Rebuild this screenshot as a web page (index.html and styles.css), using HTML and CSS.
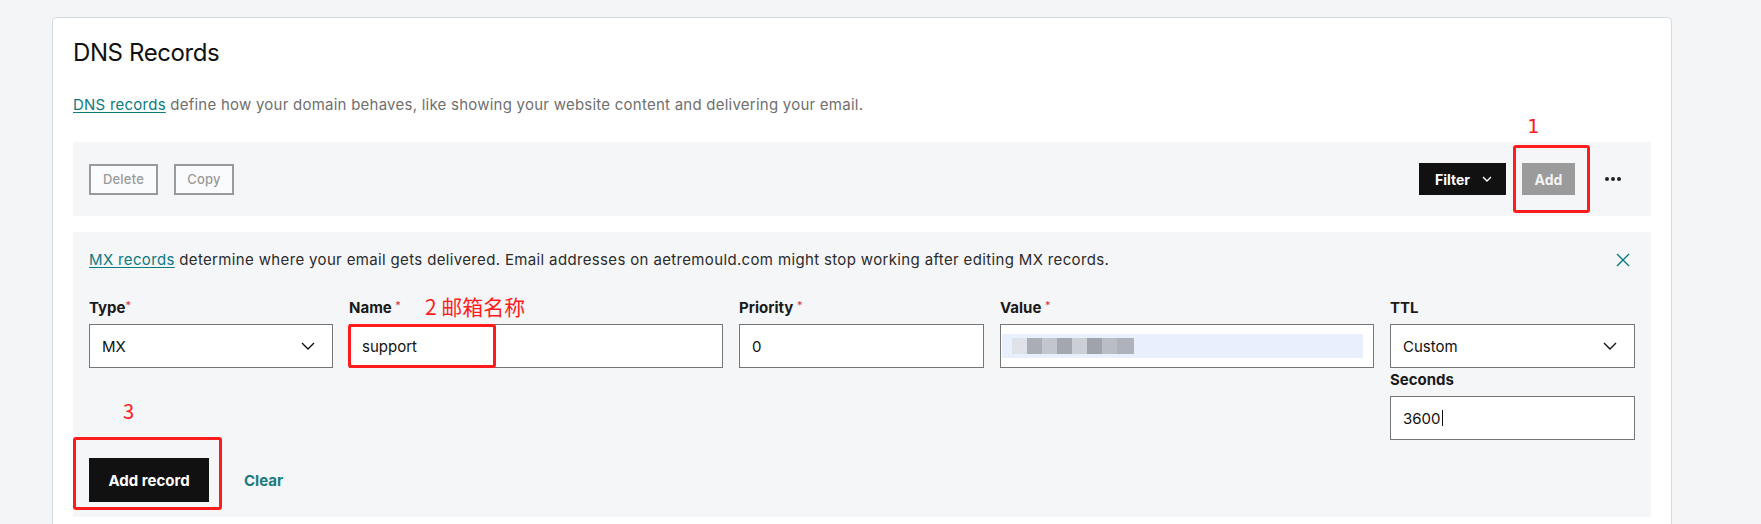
FILE: index.html
```html
<!DOCTYPE html>
<html lang="en">
<head>
<meta charset="utf-8">
<title>DNS Records</title>
<link rel="stylesheet" href="styles.css">
</head>
<body>
<main class="page">
  <section class="card">
    <h1 class="title">DNS Records</h1>
    <p class="intro"><a class="link" href="#">DNS records</a> define how your domain behaves, like showing your website content and delivering your email.</p>

    <div class="toolbar">
      <div class="tb-left">
        <button class="btn-outline btn-delete">Delete</button>
        <button class="btn-outline btn-copy">Copy</button>
      </div>
      <div class="tb-right">
        <button class="btn-filter">Filter
          <svg class="chev-sm" width="10" height="6" viewBox="0 0 10 6"><path d="M1 1l4 4 4-4" fill="none" stroke="#fff" stroke-width="1.4"/></svg>
        </button>
        <div class="annot-wrap">
          <button class="btn-add">Add</button>
          <span class="annot-box box-1"></span>
          <span class="annot-num num-1">1</span>
        </div>
        <button class="btn-more" aria-label="More"><span class="dot"></span><span class="dot"></span><span class="dot"></span></button>
      </div>
    </div>

    <div class="panel">
      <div class="notice">
        <p class="notice-text"><a class="link" href="#">MX records</a> determine where your email gets delivered. Email addresses on aetremould.com might stop working after editing MX records.</p>
        <button class="close" aria-label="Close">
          <svg width="14" height="14" viewBox="0 0 14 14"><path d="M1 1l12 12M13 1L1 13" fill="none" stroke="#0b7b82" stroke-width="1.4"/></svg>
        </button>
      </div>

      <div class="form-grid">
        <div class="field">
          <label class="label">Type<span class="req tight">*</span></label>
          <div class="select"><span>MX</span>
            <svg width="14" height="8" viewBox="0 0 14 8"><path d="M1 1l6 6 6-6" fill="none" stroke="#111" stroke-width="1.4"/></svg>
          </div>
        </div>
        <div class="field rel">
          <label class="label">Name <span class="req">*</span></label>
          <span class="annot-text">2 邮箱名称</span>
          <div class="input-wrap">
            <div class="input">support</div>
            <span class="annot-box box-2"></span>
          </div>
        </div>
        <div class="field">
          <label class="label">Priority <span class="req">*</span></label>
          <div class="input">0</div>
        </div>
        <div class="field">
          <label class="label">Value <span class="req">*</span></label>
          <div class="input value">
            <div class="autofill">
              <span class="px p1"></span><span class="px p2"></span><span class="px p3"></span><span class="px p4"></span><span class="px p5"></span><span class="px p6"></span><span class="px p7"></span><span class="px p8"></span>
            </div>
          </div>
        </div>
        <div class="field">
          <label class="label">TTL</label>
          <div class="select"><span>Custom</span>
            <svg width="14" height="8" viewBox="0 0 14 8"><path d="M1 1l6 6 6-6" fill="none" stroke="#111" stroke-width="1.4"/></svg>
          </div>
          <label class="label sub">Seconds</label>
          <div class="input">3600<span class="caret"></span></div>
        </div>
      </div>

      <div class="actions">
        <div class="annot-wrap">
          <button class="btn-primary">Add record</button>
          <span class="annot-box box-3"></span>
          <span class="annot-num num-3">3</span>
        </div>
        <a class="clear" href="#">Clear</a>
      </div>
    </div>
  </section>
</main>
</body>
</html>
```

FILE: styles.css
```css
* { box-sizing: border-box; }

body {
  margin: 0;
  background: #f4f5f7;
  font-family: Inter, "Noto Sans", sans-serif;
  color: #111;
}

button {
  font-family: inherit;
  border: 0;
  cursor: pointer;
}

.page {
  padding: 17px 0 0 52px;
}

.card {
  width: 1620px;
  background: #fff;
  border: 1px solid #d6dbe0;
  border-radius: 4px;
  padding: 19px 20px 40px;
}

.title {
  margin: 0;
  font-size: 24px;
  font-weight: 400;
  line-height: 32px;
  letter-spacing: -0.4px;
  color: #111;
}

.intro {
  margin: 24px 0 0;
  font-size: 15px;
  line-height: 24px;
  letter-spacing: 0.24px;
  color: #6f6f6f;
}

.link {
  color: #0b7b82;
  text-decoration: underline;
  text-underline-offset: 2px;
}

/* toolbar */
.toolbar {
  margin-top: 25px;
  height: 74px;
  background: #f5f6f8;
  display: flex;
  align-items: center;
  justify-content: space-between;
  padding: 0 22px 0 16px;
}

.tb-left {
  display: flex;
  gap: 16px;
}

.btn-outline {
  height: 31px;
  padding: 0;
  border: 2px solid #9a9a9a;
  background: #fafbfc;
  color: #9a9a9a;
  font-size: 13px;
  font-weight: 500;
  letter-spacing: 0.2px;
}

.btn-delete { width: 69px; }
.btn-copy { width: 60px; }

.tb-right {
  display: flex;
  align-items: center;
  gap: 16px;
}

.btn-filter {
  width: 87px;
  height: 32px;
  background: #111;
  color: #fff;
  font-size: 14px;
  font-weight: 700;
  display: flex;
  align-items: center;
  justify-content: center;
  gap: 12px;
  padding: 0 0 0 2px;
}

.btn-add {
  width: 53px;
  height: 32px;
  background: #9b9b9b;
  color: #f3f3f3;
  font-size: 14px;
  font-weight: 700;
  display: block;
}

.btn-more {
  width: 32px;
  height: 32px;
  margin-left: 6px;
  background: transparent;
  display: flex;
  align-items: center;
  justify-content: center;
  gap: 2px;
  padding: 0;
}

.dot {
  width: 4px;
  height: 4px;
  border-radius: 50%;
  background: #222;
}

/* annotations */
.annot-wrap {
  position: relative;
}

.annot-box {
  position: absolute;
  border: 3px solid #ff1c1c;
  border-radius: 3px;
  pointer-events: none;
}

.box-1 { left: -9px; top: -18px; width: 77px; height: 68px; }
.box-2 { left: -1px; top: 0; width: 148px; height: 44px; }
.box-3 { left: -16px; top: -21px; width: 149px; height: 73px; }

.annot-num {
  position: absolute;
  color: #ff1c1c;
  font-size: 20px;
  line-height: 20px;
}

.num-1 {
  left: 5px;
  top: -47px;
  font-family: "DejaVu Sans Mono", monospace;
}

.num-3 {
  left: 34px;
  top: -57px;
  font-family: "Noto Sans CJK SC", sans-serif;
}

.annot-text {
  position: absolute;
  left: 76px;
  top: -2px;
  color: #ff1c1c;
  font-family: "Noto Sans CJK SC", sans-serif;
  font-size: 21px;
  line-height: 21px;
}

/* panel */
.panel {
  margin-top: 16px;
  background: #f5f6f8;
  padding: 16px 16px 15px;
}

.notice {
  display: flex;
  align-items: center;
  justify-content: space-between;
}

.notice-text {
  margin: 0;
  font-size: 15px;
  line-height: 24px;
  letter-spacing: 0.35px;
  color: #2b2b2b;
}

.close {
  width: 24px;
  height: 24px;
  background: transparent;
  padding: 0;
  display: flex;
  align-items: center;
  justify-content: center;
}

.form-grid {
  margin-top: 26px;
  display: grid;
  grid-template-columns: 244px 374px 245px 374px 245px;
  column-gap: 16px;
  align-items: start;
}

.field {
  display: flex;
  flex-direction: column;
}

.rel { position: relative; }
.input-wrap { position: relative; }

.label {
  font-size: 15px;
  line-height: 20px;
  font-weight: 700;
  color: #1a1a1a;
  margin-bottom: 6px;
}

.label.sub {
  margin-top: 2px;
}

.req {
  color: #d8362b;
  font-size: 11px;
  font-weight: 400;
  vertical-align: 4px;
  line-height: 0;
}

.select,
.input {
  height: 44px;
  background: #fff;
  border: 1px solid #767676;
  display: flex;
  align-items: center;
  padding: 0 12px;
  font-size: 15px;
  color: #111;
}

.select {
  justify-content: space-between;
  padding-right: 17px;
}

.input.value {
  padding: 0 10px 0 1px;
}

.autofill {
  flex: 1;
  height: 24px;
  background: #e8f0fe;
  display: flex;
  align-items: center;
  padding-left: 10px;
}

.px {
  width: 15px;
  height: 16px;
  display: block;
}
.p1 { background: #dfe2e8; }
.p2 { background: #a9adb5; }
.p3 { background: #c2c6cd; }
.p4 { background: #a3a7af; }
.p5 { background: #cbcfd6; }
.p6 { background: #9fa3ab; }
.p7 { background: #b9bdc4; }
.p8 { background: #aeb2ba; width: 17px; }

.caret {
  display: inline-block;
  width: 1px;
  height: 16px;
  background: #111;
  margin-left: 1px;
}

.actions {
  margin-top: 18px;
  display: flex;
  align-items: center;
  gap: 35px;
}

.btn-primary {
  display: block;
  width: 120px;
  height: 44px;
  background: #111;
  color: #fff;
  font-size: 15px;
  font-weight: 700;
}

.clear {
  color: #1b7b81;
  font-size: 15px;
  font-weight: 700;
  text-decoration: none;
}
```
